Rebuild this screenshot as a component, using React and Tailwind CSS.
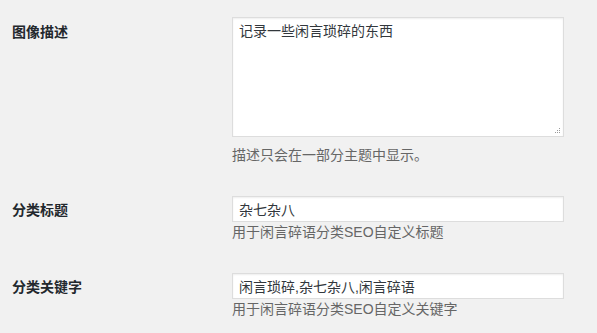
import React from "react";

const FONT = {
  fontFamily: '"Liberation Sans", "Noto Sans CJK SC", sans-serif',
};

const Row = ({ label, labelTop, children }) => (
  <div className="grid grid-cols-[220px_332px]">
    <div
      className={`text-[14px] leading-5 font-bold text-[#23282d] ${labelTop}`}
    >
      {label}
    </div>
    <div>{children}</div>
  </div>
);

const Help = ({ className = "", children }) => (
  <p className={`text-[14px] leading-5 text-[#666] ${className}`}>{children}</p>
);

export default function App() {
  return (
    <div
      className="min-h-[333px] w-full bg-[#f1f1f1] pl-3 pt-[17px] flex flex-col gap-[31px]"
      style={FONT}
    >
      {/* 图像描述 */}
      <Row label="图像描述" labelTop="mt-[5px]">
        <div className="relative">
          <textarea
            defaultValue="记录一些闲言琐碎的东西"
            className="block h-[120px] w-[332px] resize-none border border-[#ddd] bg-white px-[6px] pt-[3px] text-[14px] leading-5 text-[#32373c] shadow-[inset_0_1px_2px_rgba(0,0,0,0.07)] outline-none"
            style={FONT}
          />
          {/* resize grip */}
          <svg
            className="absolute right-[3px] bottom-[3px]"
            width="7"
            height="7"
            viewBox="0 0 7 7"
          >
            <g fill="#9a9a9a">
              <rect x="5" y="1" width="1" height="1" />
              <rect x="3" y="3" width="1" height="1" />
              <rect x="5" y="3" width="1" height="1" />
              <rect x="1" y="5" width="1" height="1" />
              <rect x="3" y="5" width="1" height="1" />
              <rect x="5" y="5" width="1" height="1" />
            </g>
          </svg>
        </div>
        <Help className="mt-2">描述只会在一部分主题中显示。</Help>
      </Row>

      {/* 分类标题 */}
      <Row label="分类标题" labelTop="mt-1">
        <input
          type="text"
          defaultValue="杂七杂八"
          className="block h-[26px] w-[332px] border border-[#ddd] bg-white px-[6px] text-[14px] text-[#32373c] shadow-[inset_0_1px_2px_rgba(0,0,0,0.07)] outline-none"
          style={FONT}
        />
        <Help>用于闲言碎语分类SEO自定义标题</Help>
      </Row>

      {/* 分类关键字 */}
      <Row label="分类关键字" labelTop="mt-1">
        <input
          type="text"
          defaultValue="闲言琐碎,杂七杂八,闲言碎语"
          className="block h-[26px] w-[332px] border border-[#ddd] bg-white px-[6px] text-[14px] text-[#32373c] shadow-[inset_0_1px_2px_rgba(0,0,0,0.07)] outline-none"
          style={FONT}
        />
        <Help>用于闲言碎语分类SEO自定义关键字</Help>
      </Row>
    </div>
  );
}
